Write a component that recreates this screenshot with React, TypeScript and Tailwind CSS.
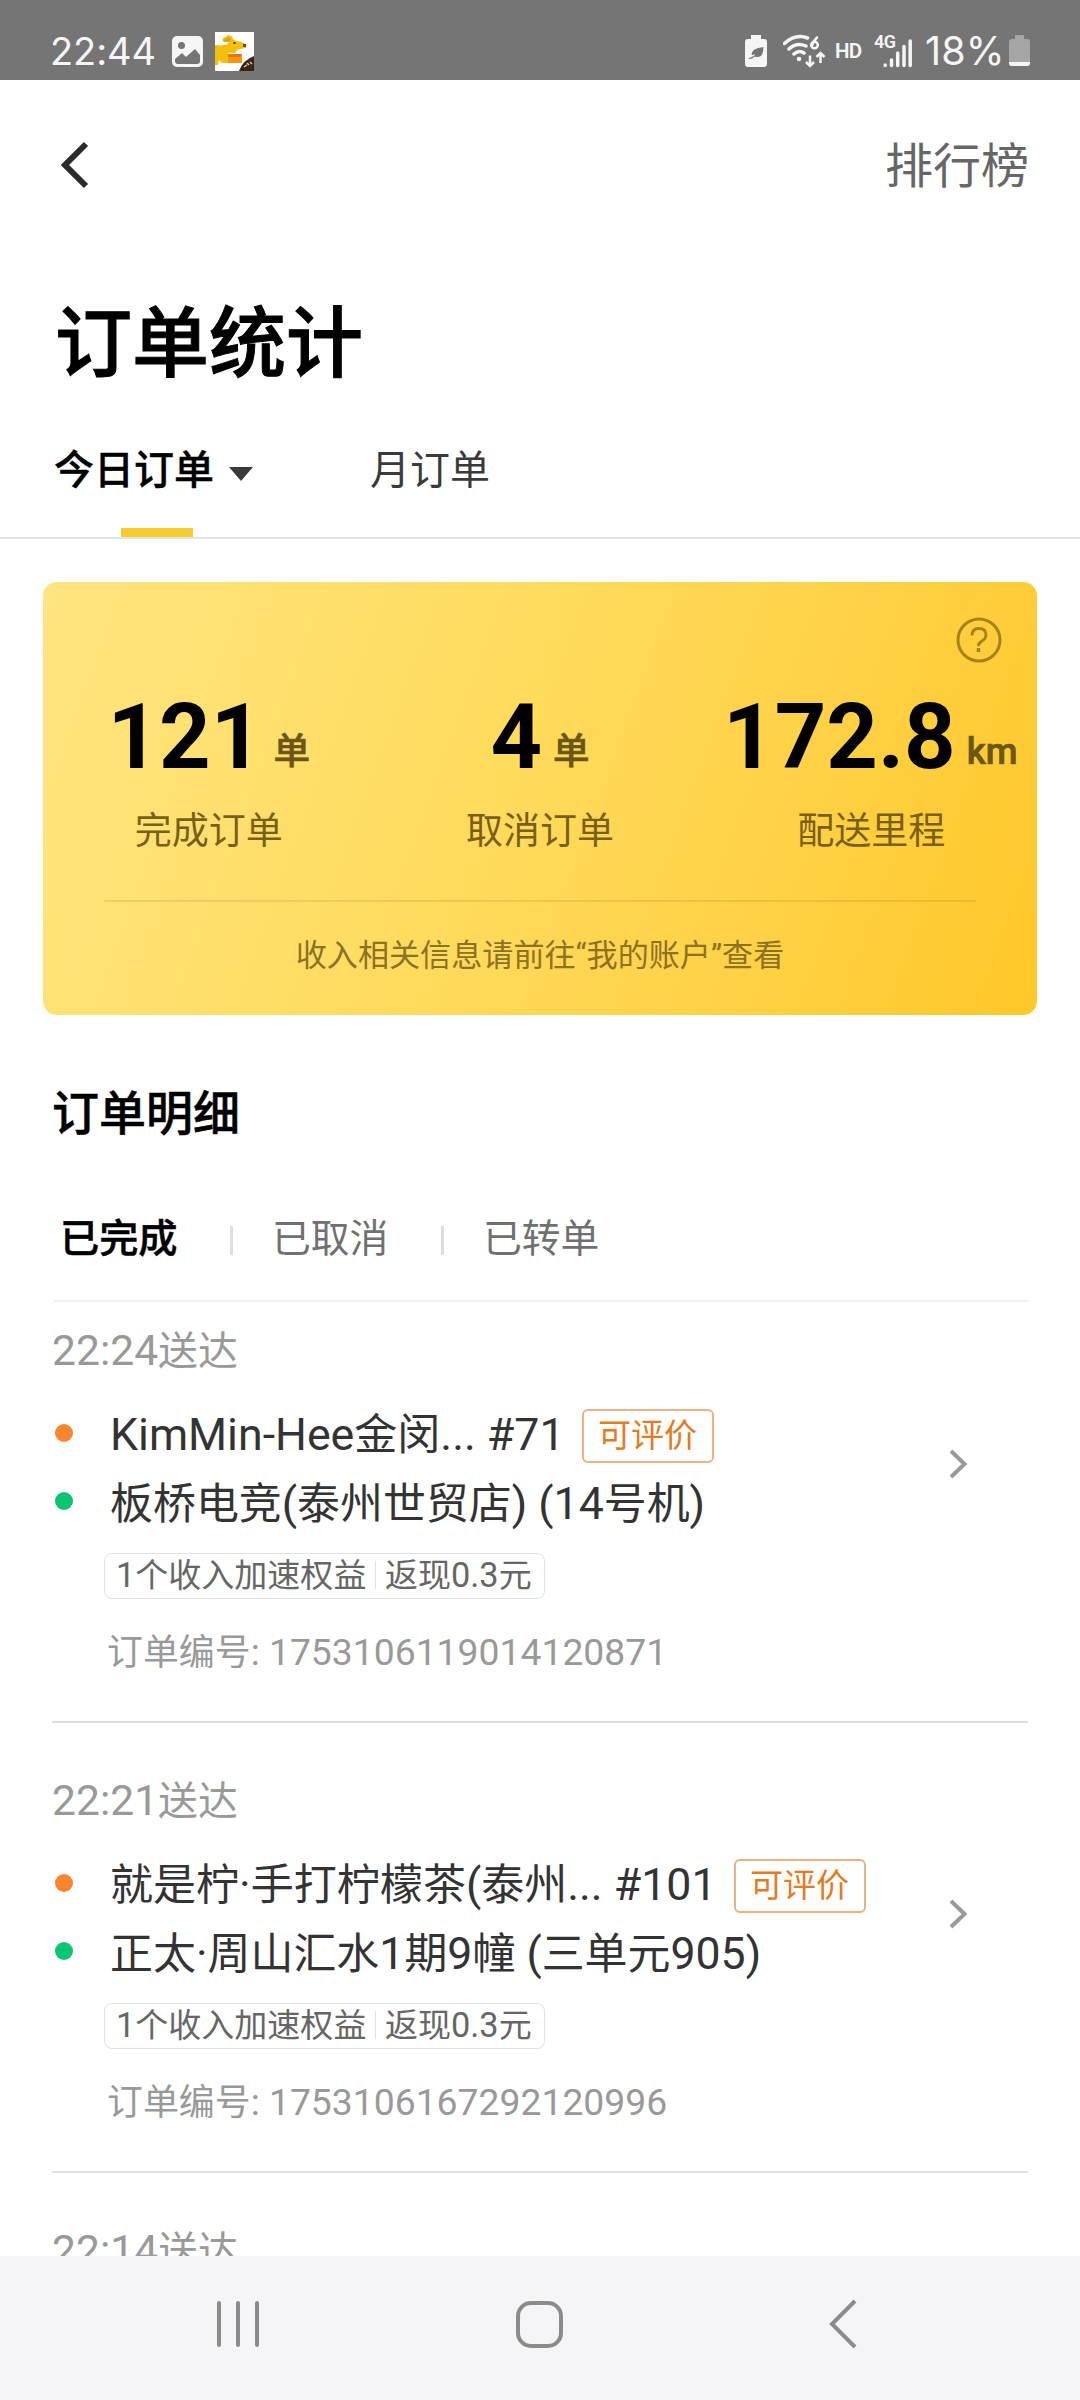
import React from 'react';

type Order = { time: string; shop: string; address: string; id: string };

const orders: Order[] = [
  { time: '22:24', shop: 'KimMin-Hee金闵... #71', address: '板桥电竞(泰州世贸店) (14号机)', id: '1753106119014120871' },
  { time: '22:21', shop: '就是柠·手打柠檬茶(泰州... #101', address: '正太·周山汇水1期9幢 (三单元905)', id: '1753106167292120996' },
];

// Sets Chinese runs slightly smaller than the Latin letters and digits beside them.
function Mixed({ text }: { text: string }) {
  return (
    <>
      {text.split(/([\u4e00-\u9fff]+)/).map((run, i) =>
        i % 2 === 1 ? (
          <span key={i} className="text-[0.963em]">
            {run}
          </span>
        ) : (
          run
        ),
      )}
    </>
  );
}

function StatusBar() {
  return (
    <header className="flex h-20 shrink-0 items-start bg-[#757575] pl-[50px] pr-[50px] text-[#f5f5f5]">
      <span className="mt-[31px] w-[122px] whitespace-nowrap font-['Inter'] text-[38px] leading-10 tracking-[-0.1px]">22:44</span>
      <svg className="mt-9 h-[31px] w-[31px]" viewBox="0 0 31 31">
        <rect width="31" height="31" rx="5" fill="#f5f5f5" />
        <circle cx="9.5" cy="9.5" r="3.5" fill="#757575" />
        <path d="M3 23l7-6 4 4 9-8 5 6v6q0 3-3 3H6q-3 0-3-3z" fill="#757575" />
      </svg>
      <svg className="ml-3 mt-8 h-[39px] w-[39px]" viewBox="0 0 39 39">
        <rect width="39" height="39" fill="#fff" />
        <path d="M0 13l5 .5 7-1 2-2-6-1.500-.5-3 4-1 .5-2 4 .5 2.500 4 3 1.500 4 .5 6 3-.5 3.500-6 1-3 1-1.500 3H13v6l3 2v2H7l-3-3-1 5H0z" fill="#f3c00e" />
        <path d="M8 8l5-3 3 2-2 3-5 0z" fill="#dba515" />
        <rect x="13" y="22" width="14" height="9" fill="#fb9211" />
        <path d="M13 22h14l-3 3H14z" fill="#e8750c" />
        <rect x="18.500" y="10" width="2" height="2" fill="#5c3d0c" />
        <rect x="28" y="12" width="3" height="3" fill="#6b4a18" />
        <path d="M39 24v15H24q4-11 15-15z" fill="#3a2418" />
        <path d="M29 35l3-2M32 31l2 2M35 30l2 2" stroke="#e8c7a5" strokeWidth="1.500" />
      </svg>
      <span className="grow" />
      <svg className="mt-[35px] h-8 w-[22px]" viewBox="0 0 22 32">
        <path d="M6 0h10v4h3q3 0 3 3v22q0 3-3 3H3q-3 0-3-3V7q0-3 3-3h3z" fill="#f5f5f5" />
        <path d="M3.500 23q5-1 7-4-2 1-4 1 0-7 12-8 0 10-6 10-2 0-3-.5-2 2.500-5 2.500z" fill="#757575" />
      </svg>
      <svg className="ml-[16px] mt-[34px] h-[34px] w-[43px]" viewBox="0 0 43 34" fill="none" stroke="#f5f5f5" strokeLinecap="round">
        <path d="M1.500 9.500q11-10 23-5.500M6 15q7.500-7 17-3M11 20q5-4.500 10-1" strokeWidth="3.500" />
        <circle cx="16" cy="25" r="2.300" fill="#f5f5f5" stroke="none" />
        <path d="M34 3.500q-4 4-5 8" strokeWidth="2.500" />
        <circle cx="31.500" cy="11" r="3.300" strokeWidth="2.500" />
        <path d="M27 21.500V32m-4-4l4 4 4-4M37.500 29V19m-4 4l4-4 4 4" strokeWidth="2.500" strokeLinecap="butt" />
      </svg>
      <span className="ml-[9px] mt-[40px] w-[29px] font-['Roboto'] text-[20.5px] font-semibold leading-[22px] tracking-[-0.7px]">HD</span>
      <span className="ml-[10px] mt-[33px] w-[9px] whitespace-nowrap font-['Roboto'] text-[18px] font-semibold leading-[18px] tracking-[-0.6px]">4G</span>
      <svg className="mt-[38px] h-[30px] w-[30px]" viewBox="0 0 30 30" fill="none" stroke="#f5f5f5" strokeWidth="3.500" strokeLinecap="round">
        <path d="M2.200 27v.5M8.500 22v5.500M14.700 15v12.500M21 8.500v19M27.200 3v24.500" />
      </svg>
      <span className="ml-[12px] mt-[31px] w-[84px] whitespace-nowrap font-['Inter'] text-[39.5px] leading-10 tracking-[0.1px]">18%</span>
      <svg className="mt-[35px] h-[31px] w-[21px]" viewBox="0 0 21 31">
        <path d="M6 0h9v4h3q3 0 3 3v21q0 3-3 3H3q-3 0-3-3V7q0-3 3-3h3z" fill="#a5a5a5" />
        <path d="M0 27h21v1q0 3-3 3H3q-3 0-3-3z" fill="#f5f5f5" />
      </svg>
    </header>
  );
}

function Stat({ value, unit, label, shift }: { value: string; unit: string; label: string; shift: string }) {
  return (
    <div className="flex w-1/3 flex-col items-center">
      <div className={`flex h-[106px] items-baseline whitespace-nowrap ${shift}`}>
        <span className="text-[90px] font-bold leading-[106px] text-black">{value}</span>
        <span className="relative -top-1 ml-[11px] text-[36.5px] font-medium text-[#6b5618] [-webkit-text-stroke:0.7px_#6b5618]">
          {unit}
        </span>
      </div>
      <div className="mt-[14px] text-[37px] leading-[54px] text-[#78601a]">{label}</div>
    </div>
  );
}

function SummaryCard() {
  return (
    <section className="relative mx-[43px] mt-[43px] h-[433px] shrink-0 rounded-[14px] bg-[linear-gradient(110deg,#ffe580_0%,#ffdb5d_45%,#ffd146_72%,#ffc829_100%)]">
      <svg className="absolute right-[35px] top-[35px] h-[46px] w-[46px]" viewBox="0 0 46 46" fill="none" stroke="#a5821c">
        <circle cx="23" cy="23" r="21" strokeWidth="3" />
        <path d="M16 18.500q0-7 7-7t7 6.500q0 3.500-4 6t-3.500 5" strokeWidth="2.800" />
        <path d="M22.500 31v4" strokeWidth="3.500" />
      </svg>
      <div className="flex pt-[103px]">
        <Stat value="121" unit="单" label="完成订单" shift="" />
        <Stat value="4" unit="单" label="取消订单" shift="" />
        <Stat value="172.8" unit="km" label="配送里程" shift="-translate-x-px" />
      </div>
      <div className="mx-[61px] mt-[41px] h-[2px] bg-black/8" />
      <p className="mt-[31px] whitespace-nowrap text-center text-[31.1px] leading-[46px] text-[#8c7224]">
        收入相关信息请前往“我的账户”查看
      </p>
    </section>
  );
}

function TimeLabel({ time }: { time: string }) {
  return (
    <div className="h-[58px] whitespace-nowrap pl-[52px] text-[39.9px] leading-[56px] text-[#999]">
      <span className="text-[42.6px]">{time}</span>送达
    </div>
  );
}

function OrderItem({ order }: { order: Order }) {
  return (
    <article className="h-[450px] shrink-0 pt-[20px]">
      <TimeLabel time={order.time} />
      <div className="flex items-start">
        <div className="w-[890px] pt-[19px]">
          <div className="flex h-[68px] items-center whitespace-nowrap pl-[55px] text-[44.7px] text-[#333]">
            <i className="mr-[37px] h-[18px] w-[18px] shrink-0 rounded-full bg-[#fd8530]" />
            <span className="mt-1 leading-[60px]">
              <Mixed text={order.shop} />
            </span>
            <span className="ml-[17px] mt-[6px] flex h-[54px] w-[132px] shrink-0 items-center justify-center rounded-md border-2 border-[#ecb184] text-[33px] leading-[50px] text-[#e67a1c]">
              可评价
            </span>
          </div>
          <div className="flex h-[68px] items-center whitespace-nowrap pl-[55px] text-[44.6px] text-[#333]">
            <i className="mr-[37px] h-[18px] w-[18px] shrink-0 rounded-full bg-[#0cc56f]" />
            <span className="mt-[6px] leading-[60px]">
              <Mixed text={order.address} />
            </span>
          </div>
          <div className="ml-[104px] mt-[18px] flex h-[46px] w-[441px] items-center whitespace-nowrap rounded-lg border border-[#e2e2e2] pb-[2px] text-[34.3px] leading-[42px] text-[#666]">
            <span className="ml-[11px] w-[259px]">
              <Mixed text="1个收入加速权益" />
            </span>
            <i className="h-[28px] w-px bg-[#e2e2e2]" />
            <span className="ml-[9px]">
              <Mixed text="返现0.3元" />
            </span>
          </div>
        </div>
        <svg className="ml-[57px] mt-[68px] h-[32px] w-[22px]" viewBox="0 0 22 32" fill="none" stroke="#999" strokeWidth="4">
          <path d="M4 3l13.500 13L4 29" />
        </svg>
      </div>
      <div className="mt-[26px] h-[54px] whitespace-nowrap pl-[107px] text-[37.3px] leading-[54px] text-[#999]">
        <Mixed text={`订单编号: ${order.id}`} />
      </div>
      <div className="ml-[52px] mr-[52px] mt-[42px] h-[2px] bg-[#ddd]" />
    </article>
  );
}

export default function App() {
  return (
    <div className="flex h-[2400px] w-[1080px] flex-col overflow-hidden bg-white font-['Roboto','Noto_Sans_CJK_SC',sans-serif]">
      <StatusBar />
      <nav className="flex h-[170px] shrink-0 items-center justify-between pl-[57px] pr-[51px]">
        <svg className="h-[50px] w-[34px]" viewBox="0 0 34 50" fill="none" stroke="#2b2b2b" strokeWidth="6">
          <path d="M29 4L8 25l21 21" />
        </svg>
        <span className="mt-1 text-[48px] leading-[70px] text-[#666]">排行榜</span>
      </nav>
      <h1 className="mt-[39px] h-[109px] shrink-0 pl-[55px] text-[77px] font-medium leading-[112px] text-black [-webkit-text-stroke:1px_black]">
        订单统计
      </h1>
      <div className="flex h-[141px] shrink-0 border-b-2 border-[#e2e5e4] pl-[54px] text-[40px]">
        <div className="flex w-[316px] flex-col">
          <div className="mt-[43px] flex h-[60px] items-center">
            <span className="font-medium leading-[60px] text-black [-webkit-text-stroke:0.4px_black]">今日订单</span>
            <svg className="ml-[15px] mt-[5px] h-[14px] w-6" viewBox="0 0 24 14">
              <path d="M0 0h24L12 14z" fill="#3a3a3a" />
            </svg>
          </div>
          <i className="ml-[67px] mt-[27px] h-[9px] w-[72px] bg-[#f8cb2f]" />
        </div>
        <span className="mt-[43px] leading-[60px] text-[#3a3a3a]">月订单</span>
      </div>
      <SummaryCard />
      <h2 className="mt-[64px] shrink-0 pl-[52px] text-[47px] font-medium leading-[70px] text-black [-webkit-text-stroke:0.5px_black]">
        订单明细
      </h2>
      <div className="ml-[54px] mr-[52px] mt-[60px] flex h-[93px] shrink-0 items-start border-b-2 border-[#f0f0f0] pl-[6px] text-[38.8px] leading-[60px] text-[#707070]">
        <span className="w-[170px] text-[39.2px] font-medium text-black [-webkit-text-stroke:0.5px_black]">已完成</span>
        <i className="mt-[17px] h-[29px] w-[3px] bg-[#ddd]" />
        <span className="ml-[39px] w-[169px]">已取消</span>
        <i className="mt-[17px] h-[29px] w-[3px] bg-[#ddd]" />
        <span className="ml-[39px]">已转单</span>
      </div>
      <main className="flex min-h-0 grow flex-col overflow-hidden">
        {orders.map((o) => (
          <OrderItem key={o.id} order={o} />
        ))}
        <div className="pt-[20px]">
          <TimeLabel time="22:14" />
        </div>
      </main>
      <footer className="flex h-36 shrink-0 items-center bg-[#f5f5f8] pb-[8px]">
        <div className="ml-[217px] flex h-[46px] w-[42px] justify-between">
          <i className="w-1 rounded-sm bg-[#8b8b8b]" />
          <i className="w-1 rounded-sm bg-[#8b8b8b]" />
          <i className="w-1 rounded-sm bg-[#8b8b8b]" />
        </div>
        <i className="ml-[257px] h-[47px] w-[47px] rounded-[15px] border-4 border-[#8b8b8b]" />
        <svg className="ml-[262px] h-[52px] w-[36px]" viewBox="0 0 36 52" fill="none" stroke="#8b8b8b" strokeWidth="4">
          <path d="M30 3L7 26l23 23" />
        </svg>
      </footer>
    </div>
  );
}
